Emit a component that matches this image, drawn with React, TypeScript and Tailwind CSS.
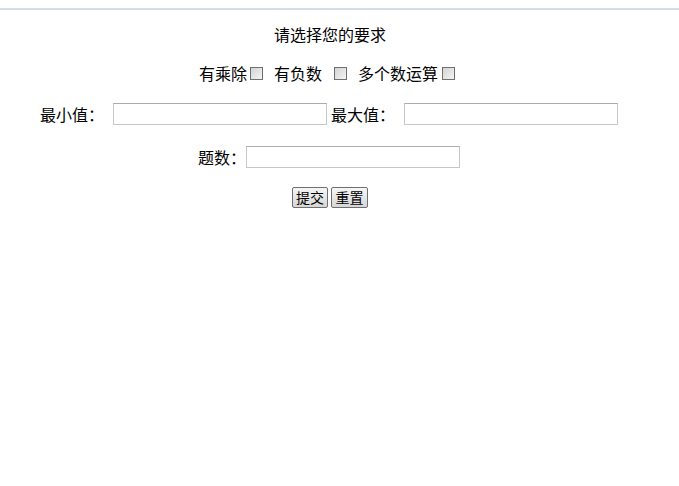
import React from "react";

const font = { fontFamily: '"Noto Sans CJK SC", "Noto Sans", sans-serif' };

function Box() {
  return (
    <span className="inline-block w-[13px] h-[13px] border border-[#707070] bg-gradient-to-br from-[#d4d4d4] to-[#f4f4f4]" />
  );
}

function Field() {
  return (
    <input
      type="text"
      className="w-[214px] h-[22px] border border-[#c4c8cc] border-t-[#a9adb2] bg-white outline-none"
    />
  );
}

export default function App() {
  return (
    <div className="w-[679px] h-[486px] bg-white text-black" style={font}>
      <div className="h-[8px] bg-white" />
      <div className="h-[2px] bg-[#d5dce3]" />
      <div className="w-[660px] flex flex-col items-center">
        <div className="mt-[14px] h-[20px] leading-[20px] text-[16px]">请选择您的要求</div>
        <div className="mt-[19px] mr-[6px] h-[20px] flex items-center text-[16px] leading-[20px]">
          <span>有乘除</span>
          <span className="ml-[3px]"><Box /></span>
          <span className="ml-[11px]">有负数</span>
          <span className="ml-[12px]"><Box /></span>
          <span className="ml-[11px]">多个数运算</span>
          <span className="ml-[4px]"><Box /></span>
        </div>
        <div className="mt-[19px] mr-[2px] h-[24px] flex items-center text-[16px] leading-[20px]">
          <span className="w-[64px]">最小值：</span>
          <span className="ml-[9px] flex"><Field /></span>
          <span className="ml-[4px] w-[64px]">最大值：</span>
          <span className="ml-[9px] flex"><Field /></span>
        </div>
        <div className="mt-[19px] mr-[2px] h-[24px] flex items-center text-[16px] leading-[20px]">
          <span className="w-[48px]">题数：</span>
          <span className="flex"><Field /></span>
        </div>
        <div className="mt-[18px] flex items-center gap-[3px]">
          <button className="w-[36px] h-[21px] border border-[#6f6f6f] rounded-[2px] bg-gradient-to-b from-[#f6f6f6] to-[#d6d6d6] text-[14px] leading-[19px] p-0">提交</button>
          <button className="w-[37px] h-[21px] border border-[#6f6f6f] rounded-[2px] bg-gradient-to-b from-[#f6f6f6] to-[#d6d6d6] text-[14px] leading-[19px] p-0">重置</button>
        </div>
      </div>
    </div>
  );
}
